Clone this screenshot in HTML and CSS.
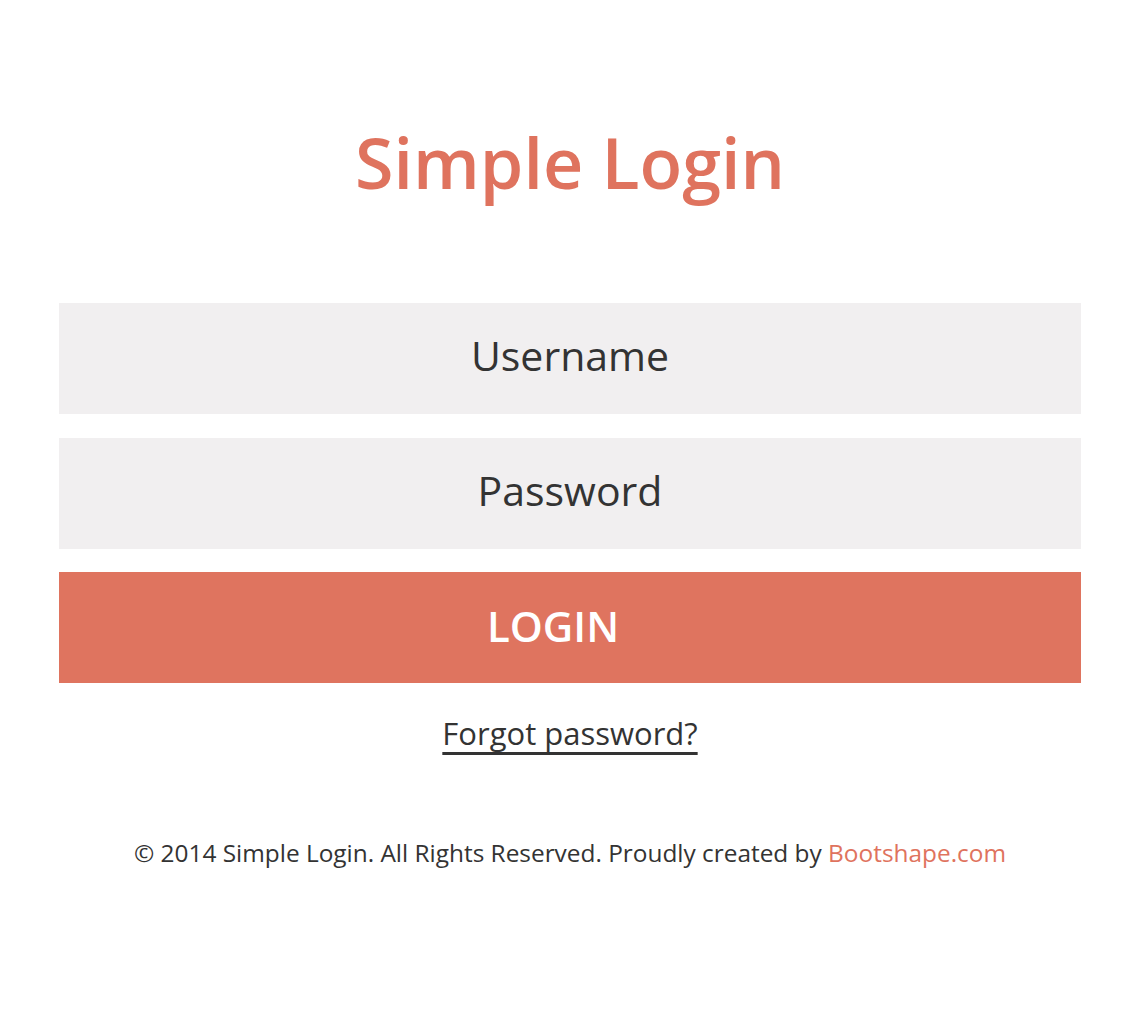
FILE: index.html
```html
<!DOCTYPE html>
<html lang="en">
<head>
    <meta charset="UTF-8">
    <meta name="viewport" content="width=device-width, initial-scale=1.0">
    <title>Simple Login</title>
    <link rel="stylesheet" href="styles.css">
</head>
<body>
    <div class="container">
        <h1>Simple Login</h1>

        <!-- Login form -->
        <form class="login-form">
            <input type="text" placeholder="Username">
            <input type="password" placeholder="Password">
            <button type="submit">LOGIN</button>
        </form>

        <a href="#" class="forgot">Forgot password?</a>

        <p class="footer">&copy; 2014 Simple Login. All Rights Reserved. Proudly created by <a href="#">Bootshape.com</a></p>
    </div>
</body>
</html>
```

FILE: styles.css
```css
/* Page */
body {
    margin: 0;
    background-color: #fff;
    color: #333;
    font-family: 'Open Sans', 'Noto Sans', sans-serif;
}

.container {
    padding: 0 59px;
    display: flex;
    flex-direction: column;
    align-items: center;
}

h1 {
    margin: 117px 0 96px;
    font-size: 70px;
    font-weight: 600;
    line-height: 90px;
    color: #df735e;
}

/* Form */
.login-form {
    width: 100%;
    display: flex;
    flex-direction: column;
    gap: 23.5px;
}

.login-form input,
.login-form button {
    box-sizing: border-box;
    height: 111px;
    border: none;
    margin: 0;
    padding: 0 0 7px;
    font-family: inherit;
    text-align: center;
    outline: none;
}

.login-form input {
    background-color: #f1eff0;
    font-size: 41px;
    color: #333;
}

.login-form input::placeholder {
    color: #333;
    opacity: 1;
}

.login-form button {
    background-color: #df745f;
    color: #fff;
    font-size: 42px;
    font-weight: 600;
    padding-right: 34px;
    padding-bottom: 5px;
    cursor: pointer;
}

.forgot {
    margin-top: 29px;
    font-size: 31px;
    color: #333;
    text-decoration: underline;
    text-decoration-skip-ink: none;
    text-underline-offset: 7px;
}

.footer {
    margin-top: 82px;
    font-size: 24.4px;
    color: #333;
}

.footer a {
    color: #df735e;
    text-decoration: none;
}
```
